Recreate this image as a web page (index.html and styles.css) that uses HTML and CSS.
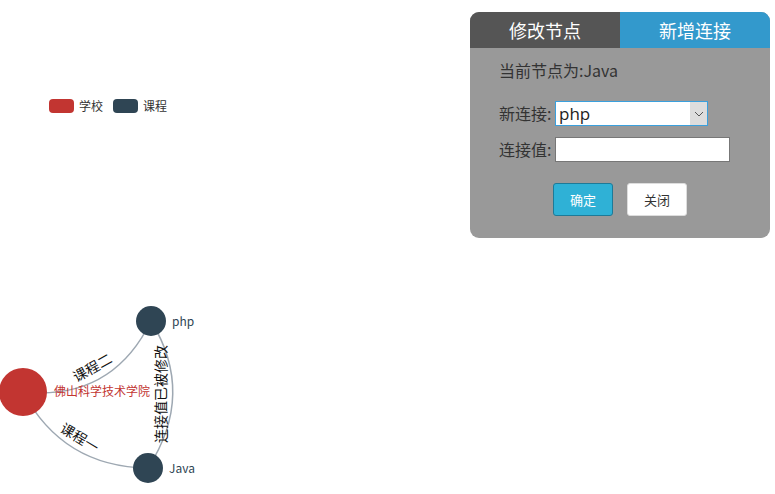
FILE: index.html
```html
<!DOCTYPE html>
<html lang="zh-CN">
<head>
<meta charset="utf-8">
<title>Graph</title>
<link rel="stylesheet" href="styles.css">
</head>
<body>
<div class="page">
  <svg class="chart" width="775" height="494" viewBox="0 0 775 494">
    <g class="legend">
      <rect x="49" y="99" width="25" height="14" rx="4" fill="#c23531"/>
      <text x="79" y="110.5">学校</text>
      <rect x="113" y="99" width="25" height="14" rx="4" fill="#2f4554"/>
      <text x="143" y="110.5">课程</text>
    </g>
    <g class="edges">
      <path d="M23 392 Q112 401 151 321"/>
      <path d="M23 392 Q63 467 148 468"/>
      <path d="M151 321 Q196 394 148 468"/>
    </g>
    <g class="nodes">
      <circle cx="23" cy="392" r="24" fill="#c23531"/>
      <circle cx="151" cy="321" r="15" fill="#2f4554"/>
      <circle cx="148" cy="468" r="15" fill="#2f4554"/>
    </g>
    <g class="edge-labels">
      <text transform="translate(92 367) rotate(-29)">课程二</text>
      <text transform="translate(80 437) rotate(31)">课程一</text>
      <text transform="translate(160 394) rotate(-90)">连接值已被修改</text>
    </g>
    <g class="node-labels">
      <text class="school" x="54" y="396">佛山科学技术学院</text>
      <text class="course" x="172" y="326">php</text>
      <text class="course" x="169" y="473">Java</text>
    </g>
  </svg>

  <div class="panel">
    <div class="tabs">
      <div class="tab tab-dark">修改节点</div>
      <div class="tab tab-blue">新增连接</div>
    </div>
    <div class="panel-body">
      <div class="current">当前节点为:Java</div>
      <div class="field first">
        <span class="label">新连接:</span>
        <div class="select-wrap">
          <select class="select">
            <option>php</option>
          </select>
          <span class="arrow">
            <svg width="10" height="6" viewBox="0 0 10 6"><path d="M1 1 L5 5 L9 1" fill="none" stroke="#555" stroke-width="1"/></svg>
          </span>
        </div>
      </div>
      <div class="field">
        <span class="label">连接值:</span>
        <input class="text-input" type="text">
      </div>
      <div class="buttons">
        <button class="btn btn-ok">确定</button>
        <button class="btn btn-close">关闭</button>
      </div>
    </div>
  </div>
</div>
</body>
</html>
```
FILE: styles.css
```css
html, body {
  margin: 0;
  padding: 0;
  background: #fff;
}
body {
  font-family: "Noto Sans CJK SC", "Noto Sans", sans-serif;
}
.page {
  position: relative;
  width: 775px;
  height: 494px;
  overflow: hidden;
}
.chart {
  display: block;
}
.chart text {
  font-family: "Noto Sans CJK SC", "Noto Sans", sans-serif;
}
.legend text {
  font-size: 12px;
  fill: #333;
}
.edges path {
  fill: none;
  stroke: #9ea8b2;
  stroke-width: 1.5;
}
.edge-labels text {
  font-size: 14px;
  fill: #111;
  text-anchor: middle;
  dominant-baseline: central;
}
.node-labels text {
  font-size: 12px;
}
.node-labels .school {
  fill: #c23531;
}
.node-labels .course {
  fill: #2f4554;
}

.panel {
  position: absolute;
  top: 12px;
  left: 470px;
  width: 300px;
  border-radius: 9px;
  overflow: hidden;
  background: #999;
}
.tabs {
  display: flex;
  height: 36px;
}
.tab {
  flex: 1;
  text-align: center;
  line-height: 36px;
  font-size: 18px;
  color: #fff;
}
.tab-dark {
  background: #555;
}
.tab-blue {
  background: #3399cc;
}
.panel-body {
  padding: 10px 0 22px 29px;
  color: #333;
}
.current {
  font-size: 16px;
  line-height: 24px;
}
.field {
  display: flex;
  align-items: center;
  height: 25px;
  margin-top: 11px;
}
.field.first {
  margin-top: 19px;
}
.label {
  width: 56px;
  font-size: 16px;
  line-height: 25px;
  white-space: nowrap;
}
.select-wrap {
  position: relative;
  width: 153px;
  height: 25px;
}
.select {
  appearance: none;
  -webkit-appearance: none;
  width: 153px;
  height: 25px;
  box-sizing: border-box;
  margin: 0;
  border: 1px solid #3aa0dd;
  border-radius: 0;
  background: #fff;
  padding: 0 0 0 3px;
  font-family: "Open Sans", "Noto Sans", sans-serif;
  font-size: 17px;
  color: #222;
  outline: none;
}
.arrow {
  position: absolute;
  top: 1px;
  right: 1px;
  width: 17px;
  height: 23px;
  background: #ddd;
  display: flex;
  align-items: center;
  justify-content: center;
}
.text-input {
  width: 175px;
  height: 25px;
  box-sizing: border-box;
  margin: 0;
  border: 1px solid #777;
  border-radius: 0;
  background: #fff;
  padding: 0 3px;
  outline: none;
}
.buttons {
  display: flex;
  justify-content: center;
  gap: 14px;
  margin-top: 21px;
  margin-left: -29px;
}
.btn {
  width: 60px;
  height: 33px;
  box-sizing: border-box;
  border-radius: 3px;
  font-family: "Noto Sans CJK SC", "Noto Sans", sans-serif;
  font-size: 13px;
  padding: 0;
  cursor: pointer;
}
.btn-ok {
  background: #2fb1d6;
  border: 1px solid #1d7a98;
  color: #fff;
}
.btn-close {
  background: #fff;
  border: 1px solid #ddd;
  color: #333;
}
```
